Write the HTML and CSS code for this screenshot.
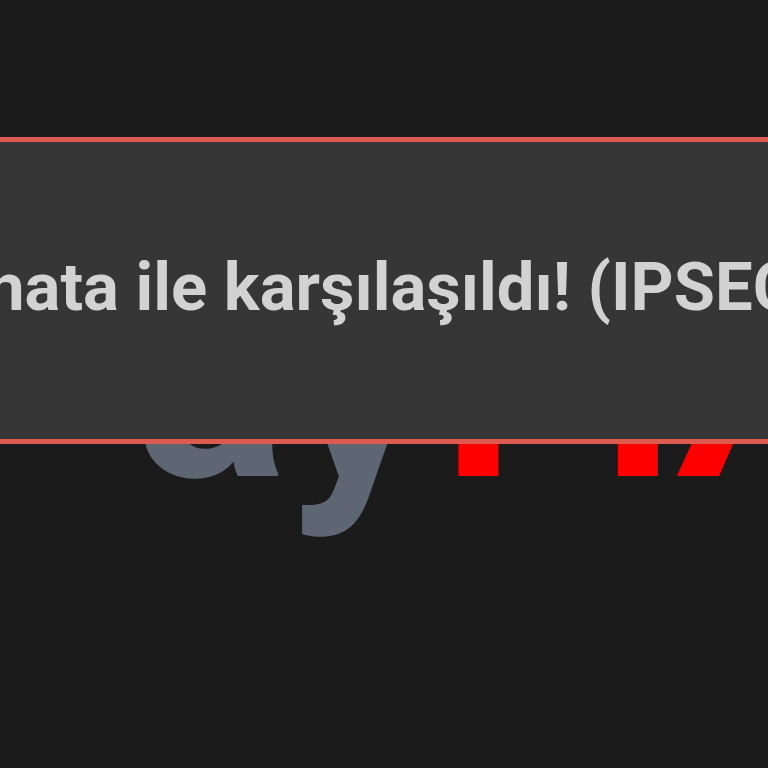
FILE: index.html
```html
<!DOCTYPE html>
<html lang="tr">
<head>
<meta charset="utf-8">
<link rel="stylesheet" href="styles.css">
</head>
<body>
<div class="screen">
  <div class="brand"><span class="brand-gray">ay</span><span class="brand-red">11<span class="brand-tight">7</span></span></div>
  <div class="toast">
    <p class="toast-text">hata ile karşılaşıldı! (IPSEC</p>
  </div>
</div>
</body>
</html>
```
FILE: styles.css
```css
html, body {
  margin: 0;
  padding: 0;
  background: #1b1b1b;
}
.screen {
  position: relative;
  width: 768px;
  height: 768px;
  overflow: hidden;
  background: #1b1b1b;
  font-family: Roboto, "Noto Sans", sans-serif;
}
.brand {
  margin-top: 237px;
  padding-left: 135px;
  font-size: 285px;
  font-weight: 700;
  line-height: 1;
  white-space: nowrap;
}
.brand-gray { color: #5f6673; }
.brand-red {
  color: #ff0000;
  margin-left: -42px;
  letter-spacing: -4px;
}
.brand-tight {
  margin-left: -60px;
}
.toast {
  position: absolute;
  left: -10px;
  right: -10px;
  top: 137px;
  height: 297px;
  background: #363636;
  border: 5px solid #dd5a51;
  display: flex;
  align-items: center;
  overflow: hidden;
}
.toast-text {
  margin: 0 0 8px -8px;
  font-size: 67px;
  font-weight: 700;
  color: #d2d2d2;
  white-space: nowrap;
}
```
